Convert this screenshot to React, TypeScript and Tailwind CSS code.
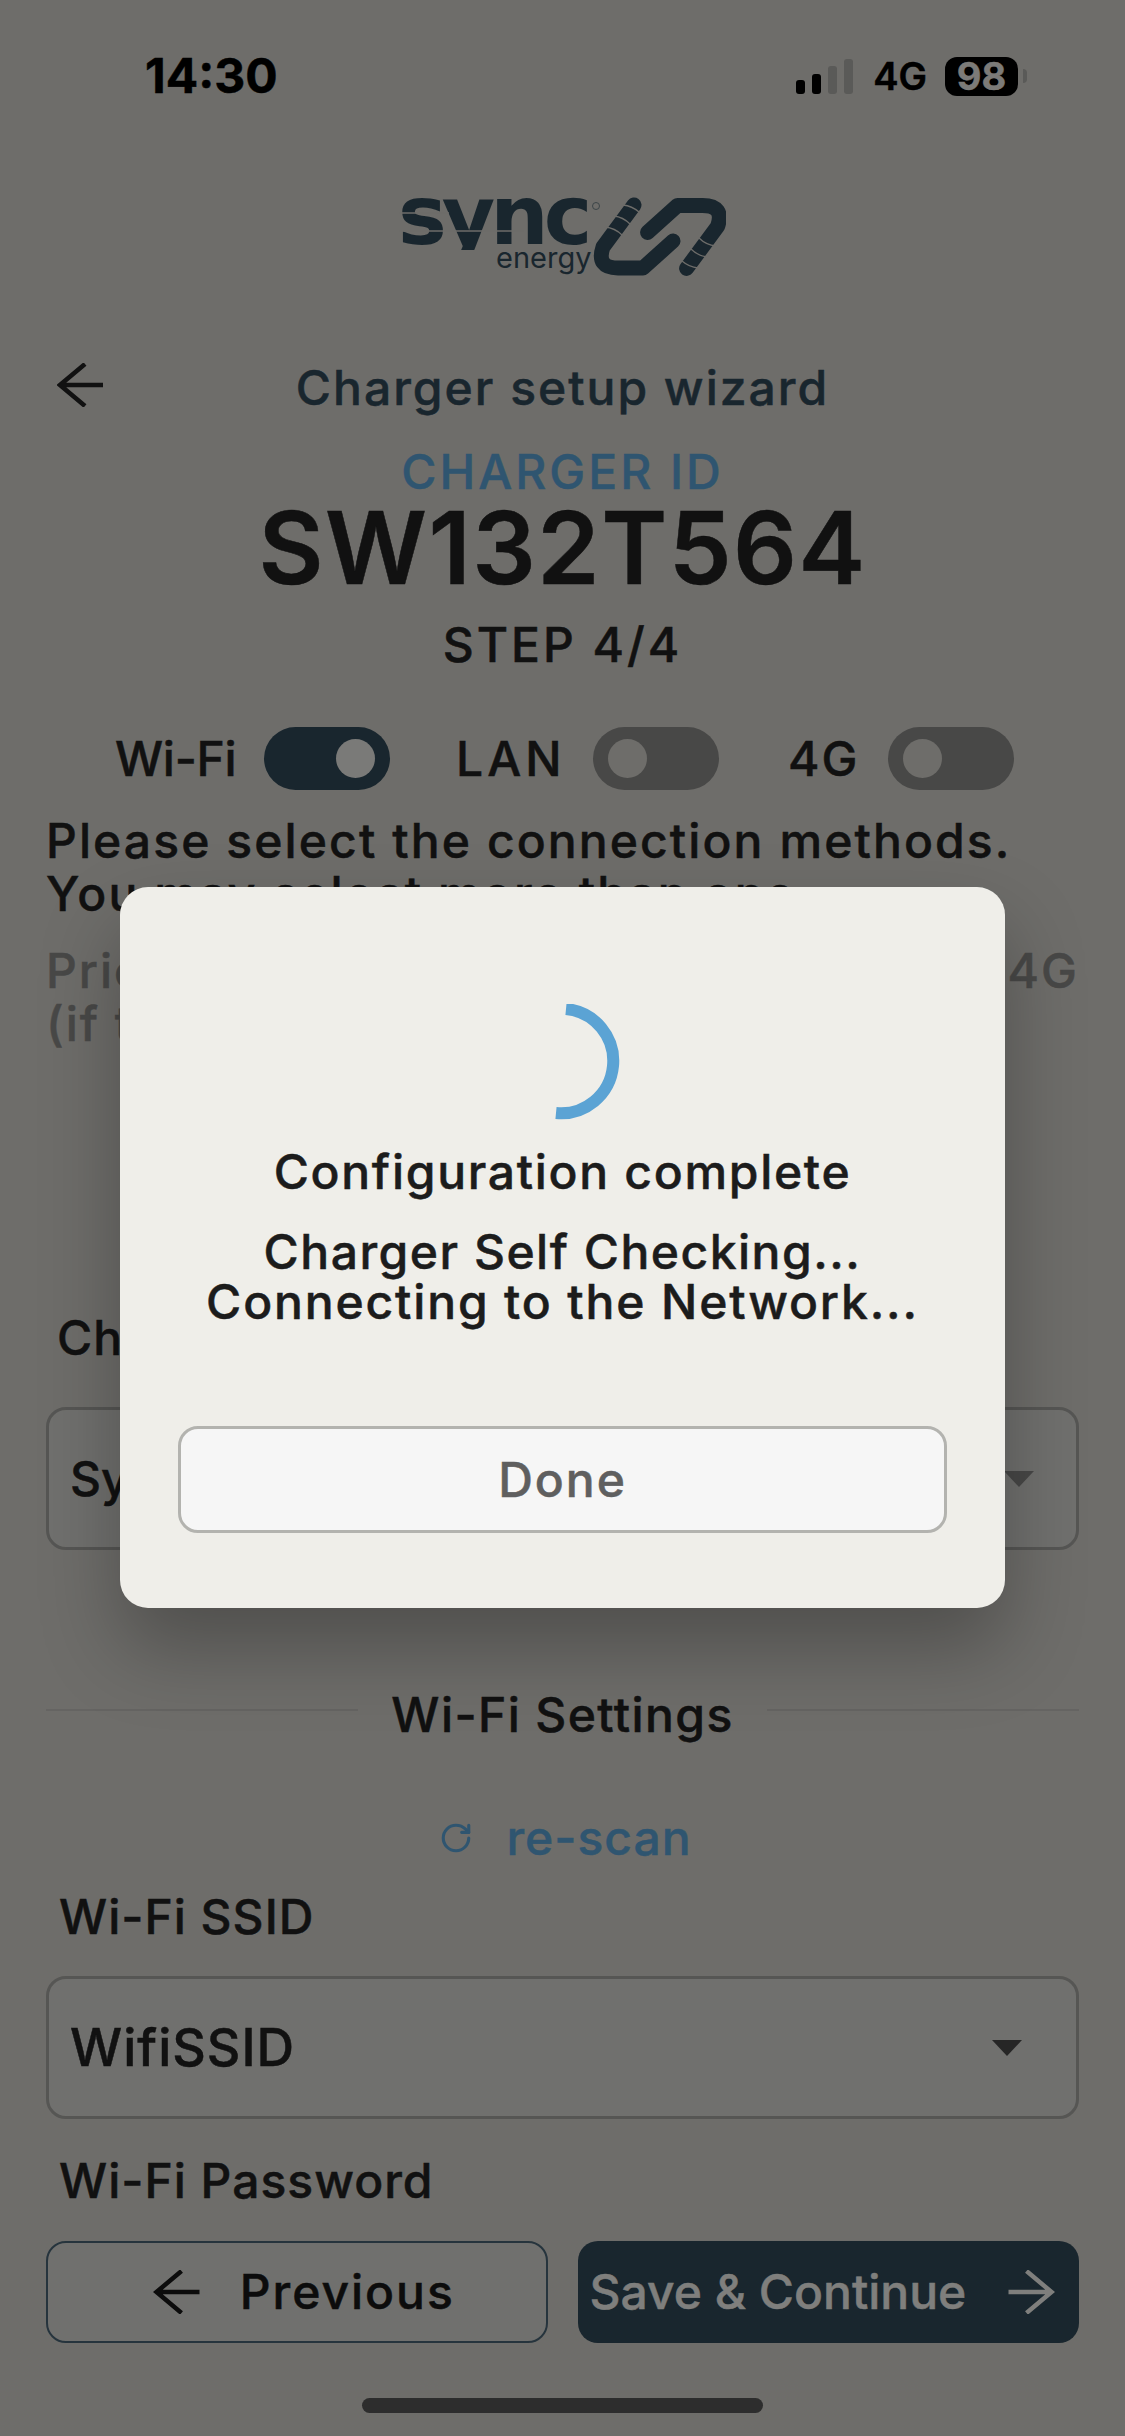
import { RotateCw } from "lucide-react";

const pageBg = "#6e6d6a";

function Arrow({ className, flip }: { className: string; flip?: boolean }) {
  return (
    <svg viewBox="0 0 46 44" className={className} fill="none" stroke="currentColor" strokeWidth="4.5">
      <path d={flip ? "M18 1 L43 22 L18 43 M43 22 H0" : "M28 1 L3 22 L28 43 M3 22 H46"} />
    </svg>
  );
}

function Toggle({ on }: { on?: boolean }) {
  return (
    <div className={`w-[126px] h-[63px] rounded-full flex items-center px-[15px] ${on ? "bg-[#19262e] justify-end" : "bg-[#484847] justify-start"}`}>
      <div className={`w-[39px] h-[39px] rounded-full ${on ? "bg-[#7a7a78]" : "bg-[#6e6d6a]"}`} />
    </div>
  );
}

function Select({ children, arrow, text }: { children: React.ReactNode; arrow: string; text: string }) {
  return (
    <div className={`mx-[46px] h-[143px] border-[3px] border-[#565654] rounded-[20px] bg-[#70706e] flex items-center justify-between pl-[21px] font-medium text-[#111] ${text}`}>
      <span>{children}</span>
      <svg viewBox="0 0 30 16" className={`w-[30px] h-[16px] ${arrow}`} fill="currentColor">
        <path d="M0 0 H30 L15 16 Z" />
      </svg>
    </div>
  );
}

function Logo() {
  const linkA = "M39 6 L8 48 Q1 69 23 69 L48 69 L78 42";
  return (
    <svg viewBox="0 0 327 98" className="w-[327px] h-[98px] mx-auto" fill="none">
      <defs>
        <clipPath id="sync-band">
          <rect x="0" y="0" width="194" height="53" />
        </clipPath>
      </defs>
      <g clipPath="url(#sync-band)">
        <text x="-1" y="47" fontSize="82" fontWeight="700" fill="#19262e" letterSpacing="-5" className="font-['DejaVu_Sans']">
          sync
        </text>
      </g>
      <path d="M0 16 H50" stroke={pageBg} strokeWidth="1.5" />
      <path d="M0 34 H125" stroke={pageBg} strokeWidth="1.5" />
      <text x="97" y="71" fontSize="29" fill="#19262e" className="font-['Inter']">
        energy
      </text>
      <circle cx="197" cy="9" r="3.5" stroke="#3c4548" strokeWidth="1" />
      <g transform="translate(196 2)">
        <path d={linkA} stroke="#19262e" strokeWidth="15" strokeLinecap="round" strokeLinejoin="round" />
        <path d={linkA} transform="rotate(180 65.3 37.7)" stroke="#19262e" strokeWidth="15" strokeLinecap="round" strokeLinejoin="round" />
        <g stroke={pageBg} strokeWidth="1.3">
          <path d="M28 6 Q37 7 44 13" />
          <path d="M19 17 Q28 18 35 25" />
          <path d="M10 28 Q20 29 27 36" />
          <path d="M103 69 Q94 68 87 62" />
          <path d="M112 58 Q103 57 96 50" />
          <path d="M121 47 Q111 46 104 39" />
        </g>
      </g>
    </svg>
  );
}

export default function App() {
  return (
    <div className="relative w-[1125px] h-[2436px] overflow-hidden bg-[#6e6d6a] font-['Inter',sans-serif] text-[#111] [-webkit-text-stroke:0.5px_currentColor]">
      {/* status bar */}
      <div className="h-[146px] pt-[6px] flex items-center justify-between pl-[145px] pr-[98px]">
        <span className="text-[48px] font-bold text-black">14:30</span>
        <div className="flex items-center">
          <div className="flex items-end gap-[7px] h-[35px]">
            <div className="w-[9px] h-[14px] rounded-[3px] bg-black" />
            <div className="w-[9px] h-[20px] rounded-[3px] bg-black" />
            <div className="w-[9px] h-[28px] rounded-[3px] bg-[#5a5a58]" />
            <div className="w-[9px] h-[35px] rounded-[3px] bg-[#5a5a58]" />
          </div>
          <span className="ml-[20px] text-[38px] font-semibold text-black">4G</span>
          <div className="ml-[18px] w-[73px] h-[39px] rounded-[12px] bg-black flex items-center justify-center text-[38px] font-bold text-[#7c7b78]">
            98
          </div>
          <div className="ml-[5px] w-[4px] h-[14px] rounded-r-full bg-[#5a5a58]" />
        </div>
      </div>

      <div className="mt-[51px]">
        <Logo />
      </div>

      {/* header */}
      <div className="mt-[65px] h-[56px] px-[57px] flex items-center">
        <Arrow className="w-[46px] h-[44px] text-[#111] -mt-[6px]" />
        <div className="flex-1 text-center text-[48px] font-medium tracking-[2px] text-[#19262e]">Charger setup wizard</div>
        <div className="w-[46px]" />
      </div>

      <div className="mt-[31px] h-[50px] leading-[50px] text-center text-[48px] font-medium tracking-[3px] text-[#2f5570]">CHARGER ID</div>
      <div className="mt-[1px] h-[100px] leading-[100px] text-center text-[100px] font-semibold tracking-[1.5px] text-[#111]">SW132T564</div>
      <div className="mt-[22px] h-[50px] leading-[50px] text-center text-[48px] font-medium tracking-[3px]">STEP 4/4</div>

      {/* connection toggles */}
      <div className="mt-[57px] h-[63px] flex items-center text-[48px] font-medium pl-[115px]">
        <span className="w-[149px] tracking-[-0.3px]">Wi-Fi</span>
        <Toggle on />
        <span className="ml-[66px] w-[137px] tracking-[4px]">LAN</span>
        <Toggle />
        <span className="ml-[69px] w-[100px] tracking-[2px]">4G</span>
        <Toggle />
      </div>

      <div className="mt-[24px] px-[46px] text-[48px] leading-[53px] font-medium tracking-[2.1px]">
        <div>Please select the connection methods.</div>
        <div>You may select more than one.</div>
      </div>
      <div className="mt-[24px] px-[46px] text-[48px] leading-[53px] font-medium tracking-[2px] text-[#484847]">
        <div className="flex justify-between">
          <span>Priority order</span>
          <span>4G</span>
        </div>
        <div>(if the above are selected)</div>
      </div>

      <div className="mt-[263px] h-[50px] leading-[50px] px-[57px] text-[48px] font-medium tracking-[1px]">Charger Network</div>
      <div className="mt-[44px]">
        <Select arrow="text-[#484847]" text="text-[48px] pr-[42px]">Sync Energy</Select>
      </div>

      {/* wifi settings */}
      <div className="mt-[140px] mx-[46px] h-[50px] flex items-center gap-[33px]">
        <div className="flex-1 h-[2px] bg-[#656462] -mt-[10px]" />
        <span className="text-[48px] leading-[50px] font-medium tracking-[1.4px]">Wi-Fi Settings</span>
        <div className="flex-1 h-[2px] bg-[#656462] -mt-[10px]" />
      </div>

      <div className="mt-[73px] h-[50px] pl-[6px] flex items-center justify-center gap-[33px] text-[48px] font-medium tracking-[1px] text-[#2f5570]">
        <RotateCw className="w-[34px] h-[34px]" strokeWidth={2.2} />
        <span>re-scan</span>
      </div>

      <div className="mt-[29px] h-[50px] leading-[50px] px-[59px] text-[48px] font-medium tracking-[1px]">Wi-Fi SSID</div>
      <div className="mt-[34px]">
        <Select arrow="text-[#262626]" text="text-[52px] tracking-[1px] pr-[54px]">WifiSSID</Select>
      </div>
      <div className="mt-[37px] h-[50px] leading-[50px] px-[59px] text-[48px] font-medium tracking-[1px]">Wi-Fi Password</div>

      {/* footer buttons */}
      <div className="mt-[35px] mx-[46px] h-[102px] grid grid-cols-2 gap-[30px]">
        <div className="rounded-[20px] border-2 border-[#26343d] bg-[#70706e] pl-[14px] flex items-center justify-center gap-[40px] text-[48px] font-medium tracking-[2px] text-[#0c0c0c]">
          <Arrow className="w-[47px] h-[44px]" />
          <span>Previous</span>
        </div>
        <div className="rounded-[20px] bg-[#19262e] flex items-center justify-between pl-[12px] pr-[24px] text-[48px] font-medium text-[#7f7f7d]">
          <span>Save &amp; Continue</span>
          <Arrow flip className="w-[47px] h-[44px]" />
        </div>
      </div>

      <div className="mt-[55px] mx-auto w-[401px] h-[15px] rounded-full bg-[#2d2d2d]" />

      {/* dialog */}
      <div className="absolute left-[120px] top-[887px] w-[885px] h-[721px] rounded-[28px] bg-[#efeee9] shadow-[0_40px_80px_rgba(0,0,0,0.28)] pt-[117px] flex flex-col items-center text-[#1c1c1c]">
        <svg viewBox="0 0 124 116" className="w-[124px] h-[116px] shrink-0" fill="none">
          <path d="M66 6 A52 52 0 0 1 56 110" stroke="#5ba3d4" strokeWidth="12" transform="translate(-1 -1)" />
        </svg>
        <div className="mt-[27px] h-[50px] leading-[50px] text-[48px] font-medium tracking-[1.7px]">Configuration complete</div>
        <div className="mt-[30px] text-center text-[48px] leading-[50px] font-medium">
          <div className="tracking-[1.5px]">Charger Self Checking...</div>
          <div className="tracking-[1.85px]">Connecting to the Network...</div>
        </div>
        <div className="mt-[99px] w-[769px] h-[107px] shrink-0 rounded-[20px] border-[3px] border-[#b3b3af] bg-[#f6f6f6] flex items-center justify-center text-[48px] font-medium tracking-[2px] text-[#5f5f5f]">
          Done
        </div>
      </div>
    </div>
  );
}
